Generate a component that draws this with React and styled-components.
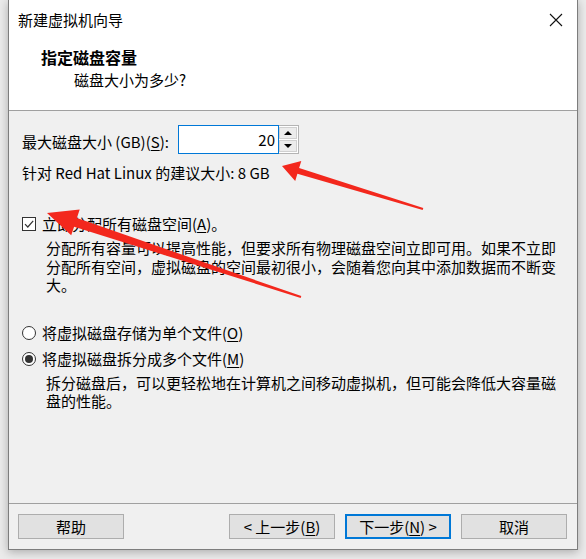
import styled, { createGlobalStyle } from 'styled-components'

const GlobalStyle = createGlobalStyle`
	html, body {
		margin: 0;
		padding: 0;
		background: #ebebeb;
	}
	body {
		font-family: "Noto Sans CJK SC", "Liberation Sans", sans-serif;
		font-size: 15px;
		color: #000;
	}
`

// red annotation arrow, computed from tail/tip coordinates
const arrowPoints = ({ tail, tip, tailW, neckW, headW, headL }) => {
	const dx = tail[0] - tip[0]
	const dy = tail[1] - tip[1]
	const len = Math.hypot(dx, dy)
	const ux = dx / len
	const uy = dy / len
	const px = -uy
	const py = ux
	const base = [tip[0] + ux * headL, tip[1] + uy * headL]
	const at = (c, w) => `${(c[0] + px * w).toFixed(1)},${(c[1] + py * w).toFixed(1)}`
	return [
		`${tip[0]},${tip[1]}`,
		at(base, headW / 2),
		at(base, neckW / 2),
		at(tail, tailW / 2),
		at(tail, -tailW / 2),
		at(base, -neckW / 2),
		at(base, -headW / 2),
	].join(' ')
}

const arrows = [
	{ tail: [423, 209], tip: [282, 166], tailW: 2, neckW: 6, headW: 21, headL: 17 },
	{ tail: [301, 297], tip: [47, 213], tailW: 2, neckW: 9, headW: 27, headL: 30 },
]

const Mnemonic = ({ children }) => <U>{children}</U>

const App = () => {
	return (
		<>
			<GlobalStyle />
			<S.Page>
				<S.Window>
					<S.TitleBar>
						<S.TitleText>新建虚拟机向导</S.TitleText>
						<S.CloseButton>
							<svg width="14" height="14" viewBox="0 0 14 14">
								<path d="M1 1 L13 13 M13 1 L1 13" stroke="#111" strokeWidth="1.1" fill="none" />
							</svg>
						</S.CloseButton>
					</S.TitleBar>
					<S.Header>
						<S.HeaderTitle>指定磁盘容量</S.HeaderTitle>
						<S.HeaderSub>磁盘大小为多少?</S.HeaderSub>
					</S.Header>

					<S.Body>
						<S.FieldRow>
							<S.FieldLabel>
								最大磁盘大小 (GB)(<Mnemonic>S</Mnemonic>):
							</S.FieldLabel>
							<S.SpinBox>
								<S.SpinInput>20</S.SpinInput>
								<S.SpinButtons>
									<S.SpinButton>
										<S.Triangle $up />
									</S.SpinButton>
									<S.SpinButton>
										<S.Triangle />
									</S.SpinButton>
								</S.SpinButtons>
							</S.SpinBox>
						</S.FieldRow>
						<S.Hint>针对 Red Hat Linux 的建议大小: 8 GB</S.Hint>

						<S.OptionRow $top={31}>
							<S.CheckBox>
								<svg width="12" height="12" viewBox="0 0 12 12">
									<path d="M2 6.2 L4.8 9 L10.2 2.8" stroke="#333" strokeWidth="1.2" fill="none" />
								</svg>
							</S.CheckBox>
							<span>
								立即分配所有磁盘空间(<Mnemonic>A</Mnemonic>)。
							</span>
						</S.OptionRow>
						<S.Description>
							分配所有容量可以提高性能，但要求所有物理磁盘空间立即可用。如果不立即分配所有空间，虚拟磁盘的空间最初很小，会随着您向其中添加数据而不断变大。
						</S.Description>

						<S.OptionRow $top={28}>
							<S.Radio />
							<span>
								将虚拟磁盘存储为单个文件(<Mnemonic>O</Mnemonic>)
							</span>
						</S.OptionRow>
						<S.OptionRow $top={6}>
							<S.Radio $checked />
							<span>
								将虚拟磁盘拆分成多个文件(<Mnemonic>M</Mnemonic>)
							</span>
						</S.OptionRow>
						<S.Description>
							拆分磁盘后，可以更轻松地在计算机之间移动虚拟机，但可能会降低大容量磁盘的性能。
						</S.Description>
					</S.Body>

					<S.Footer>
						<S.Button>帮助</S.Button>
						<S.Spacer />
						<S.Button>
							&lt; 上一步(<Mnemonic>B</Mnemonic>)
						</S.Button>
						<S.Button $primary>
							下一步(<Mnemonic>N</Mnemonic>) &gt;
						</S.Button>
						<S.Button>取消</S.Button>
					</S.Footer>
				</S.Window>

				<S.Annotations width="586" height="559" viewBox="0 0 586 559">
					{arrows.map((a, i) => (
						<polygon key={i} points={arrowPoints(a)} fill="#f3281d" />
					))}
				</S.Annotations>
			</S.Page>
		</>
	)
}
export default App

const Page = styled.div`
	position: relative;
	width: 586px;
	height: 559px;
	overflow: hidden;
`

const Window = styled.div`
	box-sizing: border-box;
	margin-left: 8px;
	width: 570px;
	height: 550px;
	display: flex;
	flex-direction: column;
	background: #f0f0f0;
	border: 1px solid #7d7d7d;
	border-top: none;
	box-shadow: 0 2px 9px rgba(0, 0, 0, 0.28);
`

const TitleBar = styled.div`
	height: 40px;
	display: flex;
	align-items: center;
	justify-content: space-between;
	background: #fff;
	padding-left: 9px;
`

const TitleText = styled.div`
	font-size: 15px;
	line-height: 20px;
`

const CloseButton = styled.div`
	width: 42px;
	height: 40px;
	display: flex;
	align-items: center;
	justify-content: center;
`

const Header = styled.div`
	height: 70px;
	box-sizing: border-box;
	background: #fff;
	border-bottom: 1px solid #a0a0a0;
	padding: 7px 0 0 32px;
	height: 71px;
`

const HeaderTitle = styled.div`
	font-size: 16px;
	font-weight: 700;
	line-height: 20px;
`

const HeaderSub = styled.div`
	margin: 3px 0 0 33px;
	font-size: 15px;
	line-height: 20px;
`

const Body = styled.div`
	flex: 1;
	display: flex;
	flex-direction: column;
	padding: 14px 0 0 13px;
`

const FieldRow = styled.div`
	display: flex;
	align-items: center;
	height: 29px;
`

const FieldLabel = styled.div`
	width: 156px;
	line-height: 20px;
	white-space: nowrap;
	padding-top: 4px;
`

const SpinBox = styled.div`
	display: flex;
	height: 29px;
`

const SpinInput = styled.div`
	box-sizing: border-box;
	width: 101px;
	height: 29px;
	background: #fff;
	border: 1px solid #0078d7;
	text-align: right;
	padding-right: 3px;
	line-height: 27px;
	font-size: 15px;
`

const SpinButtons = styled.div`
	box-sizing: border-box;
	width: 20px;
	height: 29px;
	display: flex;
	flex-direction: column;
	border: 1px solid #b4b4b4;
	border-left: none;
	background: #fff;
	padding: 1px 1px 1px 0;
	gap: 1px;
`

const SpinButton = styled.div`
	flex: 1;
	display: flex;
	align-items: center;
	justify-content: center;
	background: #ececec;
	border: 1px solid #d0d0d0;
`

const Triangle = styled.div`
	width: 0;
	height: 0;
	border-left: 4px solid transparent;
	border-right: 4px solid transparent;
	${(p) => (p.$up ? 'border-bottom: 4px solid #000;' : 'border-top: 4px solid #000;')}
`

const Hint = styled.div`
	margin-top: 9px;
	line-height: 20px;
`

const OptionRow = styled.div`
	display: flex;
	align-items: center;
	gap: 6px;
	margin-top: ${(p) => p.$top}px;
	height: 20px;
	line-height: 20px;
`

const CheckBox = styled.div`
	box-sizing: border-box;
	width: 14px;
	height: 14px;
	border: 1px solid #333;
	background: #fff;
	display: flex;
	align-items: center;
	justify-content: center;
`

const Radio = styled.div`
	box-sizing: border-box;
	width: 14px;
	height: 14px;
	border-radius: 50%;
	border: 1px solid #333;
	background: #fff;
	display: flex;
	align-items: center;
	justify-content: center;
	&::after {
		content: '';
		width: 8px;
		height: 8px;
		border-radius: 50%;
		background: #333;
		display: ${(p) => (p.$checked ? 'block' : 'none')};
	}
`

const Description = styled.div`
	margin: 5px 0 0 24px;
	width: 514px;
	line-height: 18.5px;
`

const U = styled.span`
	text-decoration: underline;
	text-underline-offset: 2px;
`

const Footer = styled.div`
	display: flex;
	gap: 10px;
	border-top: 1px solid #a0a0a0;
	padding: 10px 10px 10px 9px;
`

const Spacer = styled.div`
	flex: 1;
`

const Button = styled.div`
	box-sizing: border-box;
	width: 106px;
	height: 25px;
	display: flex;
	align-items: center;
	justify-content: center;
	background: #e1e1e1;
	border: ${(p) => (p.$primary ? '2px solid #0078d7' : '1px solid #adadad')};
	font-size: 15px;
	white-space: nowrap;
`

const Annotations = styled.svg`
	position: absolute;
	left: 0;
	top: 0;
	pointer-events: none;
`

const S = {
	Page,
	Window,
	TitleBar,
	TitleText,
	CloseButton,
	Header,
	HeaderTitle,
	HeaderSub,
	Body,
	FieldRow,
	FieldLabel,
	SpinBox,
	SpinInput,
	SpinButtons,
	SpinButton,
	Triangle,
	Hint,
	OptionRow,
	CheckBox,
	Radio,
	Description,
	Footer,
	Spacer,
	Button,
	Annotations,
}
